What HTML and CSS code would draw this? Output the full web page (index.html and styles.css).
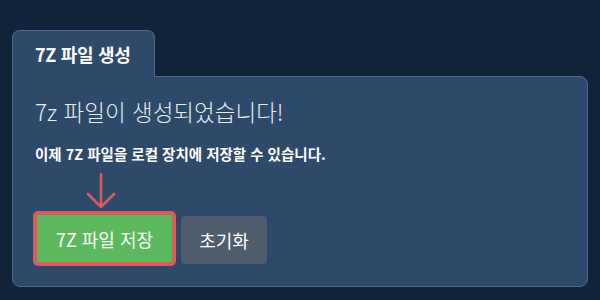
FILE: index.html
```html
<!DOCTYPE html>
<html lang="ko">

<head>
    <meta charset="UTF-8">
    <title>7Z 파일 생성</title>
    <link rel="stylesheet" href="styles.css">
</head>

<body>
    <div class="wrap">
        <div class="tab">7Z 파일 생성</div>
        <div class="panel">
            <h2>7z 파일이 생성되었습니다!</h2>
            <p class="note">이제 7Z 파일을 로컬 장치에 저장할 수 있습니다.</p>
            <div class="actions">
                <div class="save-col">
                    <svg class="arrow" width="30" height="36" viewBox="0 0 30 36">
                        <path d="M15 1 V34 M2 21 L15 34 L28 21" fill="none" stroke="#dc5b5b" stroke-width="2.5" stroke-linecap="round" stroke-linejoin="round"/>
                    </svg>
                    <button class="btn btn-save">7Z 파일 저장</button>
                </div>
                <button class="btn btn-reset">초기화</button>
            </div>
        </div>
    </div>
</body>

</html>
```

FILE: styles.css
```css
body {
    margin: 0;
    background-color: #112339;
    font-family: "Noto Sans CJK KR", "Noto Sans", sans-serif;
    color: #fff;
    height: 300px;
    overflow: hidden;
}

.wrap {
    padding: 30px 0 0 12px;
    width: 576px;
}

.tab {
    display: inline-block;
    position: relative;
    z-index: 1;
    height: 47px;
    line-height: 46px;
    padding: 0 23px 0 22px;
    background: #2d4a6a;
    border: 1px solid #4d6989;
    border-bottom: none;
    border-radius: 8px 8px 0 0;
    font-size: 18px;
    font-weight: bold;
    letter-spacing: -0.3px;
    margin-bottom: -1px;
    box-sizing: border-box;
}

.panel {
    background: #2d4a6a;
    border: 1px solid #4d6989;
    border-radius: 0 8px 8px 8px;
    padding: 17px 22px 21px;
    height: 211px;
    box-sizing: border-box;
}

h2 {
    margin: 0;
    font-size: 22.5px;
    font-weight: 300;
    line-height: 34px;
    color: #e8edf2;
}

.note {
    margin: 15px 0 0;
    font-size: 14.5px;
    font-weight: bold;
    line-height: 22px;
}

.actions {
    display: flex;
    align-items: flex-end;
    gap: 5px;
    margin-top: 8px;
}

.save-col {
    display: flex;
    flex-direction: column;
    align-items: center;
    margin-left: -2px;
}

.arrow {
    display: block;
    margin: 0 0 2px -8px;
}

.btn {
    border: none;
    border-radius: 4px;
    color: #fff;
    font-family: inherit;
    font-size: 18px;
    height: 48px;
    cursor: pointer;
}

.btn-save {
    background: #5cb85c;
    width: 143px;
    height: 55px;
    border: 4px solid #dc5b5b;
    border-radius: 5px;
}

.btn-reset {
    background: #4e5d6e;
    width: 86px;
    margin-bottom: 2px;
}
```
